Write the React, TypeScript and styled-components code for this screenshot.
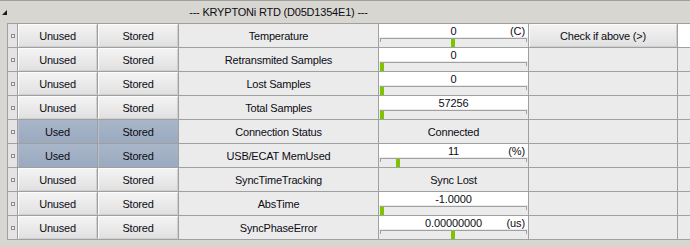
import React from "react";
import styled, { createGlobalStyle, css } from "styled-components";

const Global = createGlobalStyle`
  html, body { margin: 0; padding: 0; background: #d8d6d0; }
  body { font-family: "Liberation Sans", Arial, sans-serif; font-size: 11px; color: #0c0c14; }
`;

const COLS = "9px 79px 80px 199px 149px 148px 12px";

const Frame = styled.div`
  width: 690px;
  height: 247px;
  box-sizing: border-box;
  border-top: 1px solid #a0a0a0;
  background: #d8d6d0;
  display: flex;
  flex-direction: column;
`;

const Header = styled.div`
  height: 22px;
  display: flex;
`;

const Corner = styled.div`
  width: 8px;
  display: flex;
  align-items: flex-start;
  padding: 9px 0 0 2px;
  box-sizing: border-box;
`;

const HeaderGrid = styled.div`
  display: grid;
  grid-template-columns: ${COLS};
  column-gap: 1px;
`;

const Title = styled.div`
  grid-column: 4;
  display: flex;
  align-items: center;
  justify-content: center;
  letter-spacing: -0.2px;
  white-space: nowrap;
`;

const Grid = styled.div`
  margin-left: 7px;
  display: grid;
  grid-template-columns: ${COLS};
  grid-auto-rows: 23px;
  gap: 1px;
  padding: 1px 0 1px 1px;
  background: #a0a0a0;
`;

const MarkCell = styled.div`
  background: #e4e4e4;
  display: flex;
  align-items: center;
  justify-content: center;
  padding-left: 1px;
`;

const MarkIcon = styled.div`
  width: 4px;
  height: 4px;
  box-sizing: border-box;
  border: 1px solid #8c8c8c;
  background: #f0f0f0;
`;

const Button = styled.div<{ $used?: boolean }>`
  display: flex;
  align-items: center;
  justify-content: center;
  letter-spacing: -0.2px;
  white-space: nowrap;
  ${(p) =>
    p.$used
      ? css`
          background: linear-gradient(#a9b6ca, #9aa9be);
          box-shadow: inset 1px 0 0 #b4c0d2;
        `
      : css`
          background: linear-gradient(#f4f4f4, #e0e0e0);
          box-shadow: inset 1px 1px 0 #fbfbfb, inset -1px -1px 0 #cfcfcf;
        `}
`;

const Cell = styled.div<{ $white?: boolean }>`
  background: ${(p) => (p.$white ? "#ffffff" : "#ebebeb")};
  display: flex;
  align-items: center;
  justify-content: center;
  letter-spacing: -0.2px;
  white-space: nowrap;
`;

const ValueCell = styled.div`
  background: #ebebeb;
  display: flex;
  flex-direction: column;
`;

const ValueLine = styled.div`
  height: 13px;
  background: #ffffff;
  display: grid;
  grid-template-columns: 1fr auto 1fr;
  align-items: center;
  padding: 0 3px;
  letter-spacing: -0.1px;
  white-space: nowrap;
`;

const ValueText = styled.span`
  grid-column: 2;
  padding-top: 1px;
`;

const Unit = styled.span`
  grid-column: 3;
  justify-self: end;
  padding-top: 1px;
`;

const Track = styled.div`
  position: relative;
  margin: 1px 1px 0;
  height: 8px;
  border-top: 1px solid #a0a0a0;
  display: flex;
  &::before,
  &::after {
    content: "";
    position: absolute;
    top: 0;
    width: 1px;
    height: 3px;
    background: #a0a0a0;
  }
  &::before { left: 0; }
  &::after { right: 0; }
`;

const Marker = styled.div`
  width: 4px;
  height: 8px;
  background: #7dc400;
  position: relative;
  z-index: 1;
`;

type Row = {
  used: boolean;
  label: string;
  value: string;
  unit?: string;
  pos?: number;
  plain?: boolean;
  check?: boolean;
};

const rows: Row[] = [
  { used: false, label: "Temperature", value: "0", unit: "(C)", pos: 0.5, check: true },
  { used: false, label: "Retransmited Samples", value: "0", pos: 0 },
  { used: false, label: "Lost Samples", value: "0", pos: 0 },
  { used: false, label: "Total Samples", value: "57256", pos: 0 },
  { used: true, label: "Connection Status", value: "Connected", plain: true },
  { used: true, label: "USB/ECAT MemUsed", value: "11", unit: "(%)", pos: 0.11 },
  { used: false, label: "SyncTimeTracking", value: "Sync Lost", plain: true },
  { used: false, label: "AbsTime", value: "-1.0000", pos: 0 },
  { used: false, label: "SyncPhaseError", value: "0.00000000", unit: "(us)", pos: 0.5 },
];

const TRACK_W = 146;
const MARK_W = 4;

export default function App() {
  return (
    <>
      <Global />
      <Frame>
        <Header>
          <Corner>
            <svg width="5" height="5" viewBox="0 0 5 5">
              <polygon points="5,0 5,5 0,5" fill="#1a1a1a" />
            </svg>
          </Corner>
          <HeaderGrid>
            <Title>--- KRYPTONi RTD (D05D1354E1) ---</Title>
          </HeaderGrid>
        </Header>
        <Grid>
          {rows.map((r, i) => (
            <React.Fragment key={i}>
              <MarkCell>
                <MarkIcon />
              </MarkCell>
              <Button $used={r.used}>{r.used ? "Used" : "Unused"}</Button>
              <Button $used={r.used}>Stored</Button>
              <Cell>{r.label}</Cell>
              {r.plain ? (
                <Cell>{r.value}</Cell>
              ) : (
                <ValueCell>
                  <ValueLine>
                    <ValueText>{r.value}</ValueText>
                    {r.unit && <Unit>{r.unit}</Unit>}
                  </ValueLine>
                  <Track>
                    <Marker
                      style={{ marginLeft: Math.round((r.pos ?? 0) * (TRACK_W - MARK_W)) }}
                    />
                  </Track>
                </ValueCell>
              )}
              {r.check ? <Button>Check if above (&gt;)</Button> : <Cell />}
              <Cell $white={r.check} />
            </React.Fragment>
          ))}
        </Grid>
      </Frame>
    </>
  );
}
